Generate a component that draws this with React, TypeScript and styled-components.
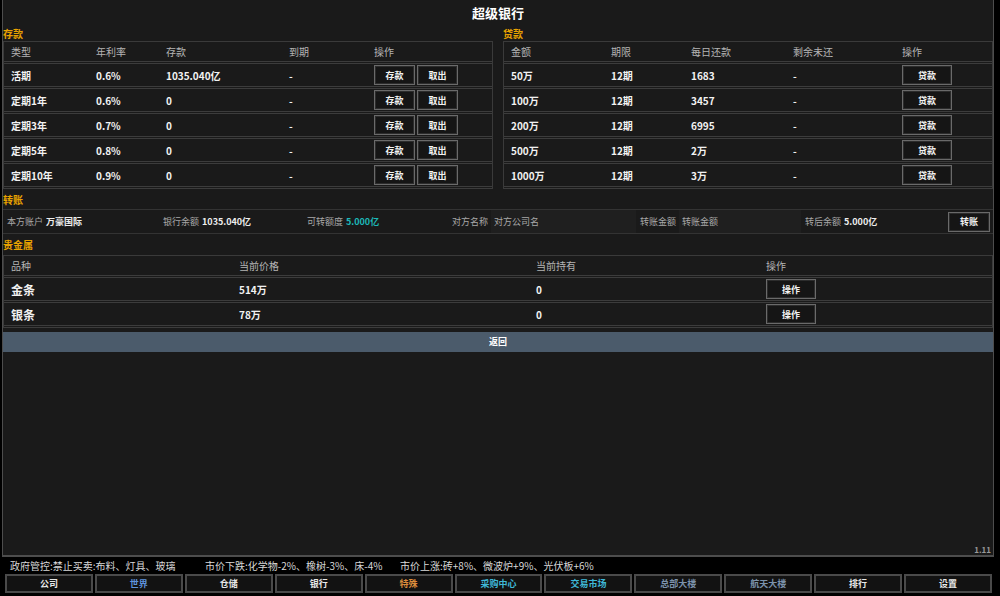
import styled, { createGlobalStyle } from "styled-components";

const GlobalStyle = createGlobalStyle`
  html, body {
    margin: 0;
    padding: 0;
    background: #000;
  }
  body {
    font-family: "Noto Sans CJK SC", "Noto Sans", sans-serif;
    color: #fff;
  }
`;

const Screen = styled.div`
  width: 1000px;
  height: 596px;
  display: flex;
  flex-direction: column;
  background: #000;
  overflow: hidden;
`;

const Panel = styled.div`
  height: 557px;
  box-sizing: border-box;
  margin: 0 6px 0 2px;
  border: 1px solid #4d4d4d;
  border-top: none;
  border-bottom-width: 2px;
  background: #1a1a1a;
  display: flex;
  flex-direction: column;
`;

const Title = styled.div`
  height: 26px;
  line-height: 26px;
  text-align: center;
  font-size: 13px;
  font-weight: bold;
  color: #fff;
`;

const SectionTitle = styled.div<{ $h: number }>`
  height: ${({ $h }) => $h}px;
  line-height: ${({ $h }) => $h + 1}px;
  font-size: 10px;
  font-weight: bold;
  color: #e8a200;
`;

const TopRow = styled.div`
  display: flex;
  gap: 10px;
`;

const Column = styled.div<{ $w?: number }>`
  width: ${({ $w }) => ($w ? `${$w}px` : "auto")};
  flex: ${({ $w }) => ($w ? "none" : "1")};
`;

const Table = styled.div`
  border: 1px solid #3a3a3a;
  border-bottom: none;
`;

const Row = styled.div<{ $cols: string; $h: number }>`
  display: grid;
  grid-template-columns: ${({ $cols }) => $cols};
  align-items: center;
  box-sizing: border-box;
  height: ${({ $h }) => $h}px;
  padding-left: 7px;
  border-bottom: 3px double #3c3c3c;
`;

const HeadCell = styled.div`
  font-size: 10px;
  color: #b5b5b5;
`;

const Cell = styled.div<{ $big?: boolean }>`
  font-size: ${({ $big }) => ($big ? 12 : 10)}px;
  font-weight: bold;
  color: #f2f2f2;
  white-space: nowrap;
`;

const Actions = styled.div`
  display: flex;
  gap: 2px;
`;

const Button = styled.button<{ $w: number }>`
  width: ${({ $w }) => $w}px;
  height: 20px;
  padding: 0;
  background: #151515;
  border: 1px solid #6a6a6a;
  box-shadow: inset 0 0 0 1px #2c2c2c;
  color: #f2f2f2;
  font-family: inherit;
  font-size: 9px;
  font-weight: bold;
`;

const TransferRow = styled.div`
  display: flex;
  align-items: center;
  box-sizing: border-box;
  height: 25px;
  padding: 0 3px 0 4px;
  border-top: 1px solid #333;
  border-bottom: 1px solid #333;
`;

const Field = styled.div<{ $w?: number }>`
  display: flex;
  align-items: center;
  gap: 3px;
  width: ${({ $w }) => ($w ? `${$w}px` : "auto")};
  flex: none;
  margin-right: ${({ $w }) => ($w ? 0 : 4)}px;
`;

const Label = styled.span`
  font-size: 9px;
  color: #a8a8a8;
`;

const Value = styled.span<{ $color?: string }>`
  font-size: 9px;
  font-weight: bold;
  color: ${({ $color }) => $color ?? "#eee"};
`;

const Input = styled.input<{ $w: number }>`
  width: ${({ $w }) => $w}px;
  height: 23px;
  box-sizing: border-box;
  padding: 0 3px;
  background: #1f1f1f;
  border: none;
  outline: none;
  color: #aaa;
  font-family: inherit;
  font-size: 9px;
  &::placeholder {
    color: #a8a8a8;
  }
`;

const Spring = styled.div`
  flex: 1;
`;

const BackBar = styled.div`
  margin-top: 4px;
  height: 20px;
  line-height: 20px;
  text-align: center;
  background: #4b5b6b;
  font-size: 9px;
  font-weight: bold;
  color: #fff;
`;

const Empty = styled.div`
  flex: 1;
  display: flex;
  align-items: flex-end;
  justify-content: flex-end;
  padding: 0 2px 0 0;
`;

const Version = styled.span`
  font-size: 8px;
  font-weight: bold;
  color: #9a9a9a;
  line-height: 11px;
`;

const NewsLine = styled.div`
  height: 17px;
  display: flex;
  align-items: center;
  padding-left: 10px;
  font-size: 10px;
  color: #d8d8d8;
`;

const NewsItem = styled.span`
  width: 195px;
  flex: none;
  white-space: nowrap;
`;

const NavBar = styled.div`
  display: flex;
  gap: 2px;
  height: 19px;
  padding: 0 8px 0 5px;
`;

const NavButton = styled.button<{ $color: string }>`
  flex: 1;
  padding: 0;
  background: #121212;
  border: 2px solid #4a4a4a;
  color: ${({ $color }) => $color};
  font-family: inherit;
  font-size: 9px;
  font-weight: bold;
`;

const depositCols = "85px 70px 123px 85px 1fr";
const loanCols = "100px 80px 102px 109px 1fr";
const metalCols = "228px 297px 230px 1fr";

const deposits = [
  { type: "活期", rate: "0.6%", amount: "1035.040亿" },
  { type: "定期1年", rate: "0.6%", amount: "0" },
  { type: "定期3年", rate: "0.7%", amount: "0" },
  { type: "定期5年", rate: "0.8%", amount: "0" },
  { type: "定期10年", rate: "0.9%", amount: "0" },
];

const loans = [
  { amount: "50万", daily: "1683" },
  { amount: "100万", daily: "3457" },
  { amount: "200万", daily: "6995" },
  { amount: "500万", daily: "2万" },
  { amount: "1000万", daily: "3万" },
];

const metals = [
  { name: "金条", price: "514万" },
  { name: "银条", price: "78万" },
];

const navItems = [
  { label: "公司", color: "#e8e8e8" },
  { label: "世界", color: "#5f93dc" },
  { label: "仓储", color: "#e8e8e8" },
  { label: "银行", color: "#e8e8e8" },
  { label: "特殊", color: "#dc8c3c" },
  { label: "采购中心", color: "#3fb8d8" },
  { label: "交易市场", color: "#3fb8d8" },
  { label: "总部大楼", color: "#7c92ac" },
  { label: "航天大楼", color: "#7c92ac" },
  { label: "排行", color: "#e8e8e8" },
  { label: "设置", color: "#e8e8e8" },
];

export default function App() {
  return (
    <Screen>
      <GlobalStyle />
      <Panel>
        <Title>超级银行</Title>

        <TopRow>
          <Column $w={490}>
            <SectionTitle $h={15}>存款</SectionTitle>
            <Table>
              <Row $cols={depositCols} $h={22}>
                <HeadCell>类型</HeadCell>
                <HeadCell>年利率</HeadCell>
                <HeadCell>存款</HeadCell>
                <HeadCell>到期</HeadCell>
                <HeadCell>操作</HeadCell>
              </Row>
              {deposits.map((d) => (
                <Row key={d.type} $cols={depositCols} $h={25}>
                  <Cell>{d.type}</Cell>
                  <Cell>{d.rate}</Cell>
                  <Cell>{d.amount}</Cell>
                  <Cell>-</Cell>
                  <Actions>
                    <Button $w={41}>存款</Button>
                    <Button $w={41}>取出</Button>
                  </Actions>
                </Row>
              ))}
            </Table>
          </Column>

          <Column>
            <SectionTitle $h={15}>贷款</SectionTitle>
            <Table>
              <Row $cols={loanCols} $h={22}>
                <HeadCell>金额</HeadCell>
                <HeadCell>期限</HeadCell>
                <HeadCell>每日还款</HeadCell>
                <HeadCell>剩余未还</HeadCell>
                <HeadCell>操作</HeadCell>
              </Row>
              {loans.map((l) => (
                <Row key={l.amount} $cols={loanCols} $h={25}>
                  <Cell>{l.amount}</Cell>
                  <Cell>12期</Cell>
                  <Cell>{l.daily}</Cell>
                  <Cell>-</Cell>
                  <Actions>
                    <Button $w={50}>贷款</Button>
                  </Actions>
                </Row>
              ))}
            </Table>
          </Column>
        </TopRow>

        <SectionTitle $h={20}>转账</SectionTitle>
        <TransferRow>
          <Field $w={156}>
            <Label>本方账户</Label>
            <Value>万豪国际</Value>
          </Field>
          <Field $w={144}>
            <Label>银行余额</Label>
            <Value>1035.040亿</Value>
          </Field>
          <Field $w={145}>
            <Label>可转额度</Label>
            <Value $color="#1cb8b8">5.000亿</Value>
          </Field>
          <Field>
            <Label>对方名称</Label>
            <Input $w={145} placeholder="对方公司名" />
          </Field>
          <Field>
            <Label>转账金额</Label>
            <Input $w={122} placeholder="转账金额" />
          </Field>
          <Field>
            <Label>转后余额</Label>
            <Value>5.000亿</Value>
          </Field>
          <Spring />
          <Button $w={42}>转账</Button>
        </TransferRow>

        <SectionTitle $h={21}>贵金属</SectionTitle>
        <Table>
          <Row $cols={metalCols} $h={22}>
            <HeadCell>品种</HeadCell>
            <HeadCell>当前价格</HeadCell>
            <HeadCell>当前持有</HeadCell>
            <HeadCell>操作</HeadCell>
          </Row>
          {metals.map((m) => (
            <Row key={m.name} $cols={metalCols} $h={25}>
              <Cell $big>{m.name}</Cell>
              <Cell>{m.price}</Cell>
              <Cell>0</Cell>
              <Actions>
                <Button $w={50}>操作</Button>
              </Actions>
            </Row>
          ))}
        </Table>

        <BackBar>返回</BackBar>

        <Empty>
          <Version>1.11</Version>
        </Empty>
      </Panel>

      <NewsLine>
        <NewsItem>政府管控:禁止买卖:布料、灯具、玻璃</NewsItem>
        <NewsItem>市价下跌:化学物-2%、橡树-3%、床-4%</NewsItem>
        <NewsItem>市价上涨:砖+8%、微波炉+9%、光伏板+6%</NewsItem>
      </NewsLine>

      <NavBar>
        {navItems.map((n) => (
          <NavButton key={n.label} $color={n.color}>
            {n.label}
          </NavButton>
        ))}
      </NavBar>
    </Screen>
  );
}
